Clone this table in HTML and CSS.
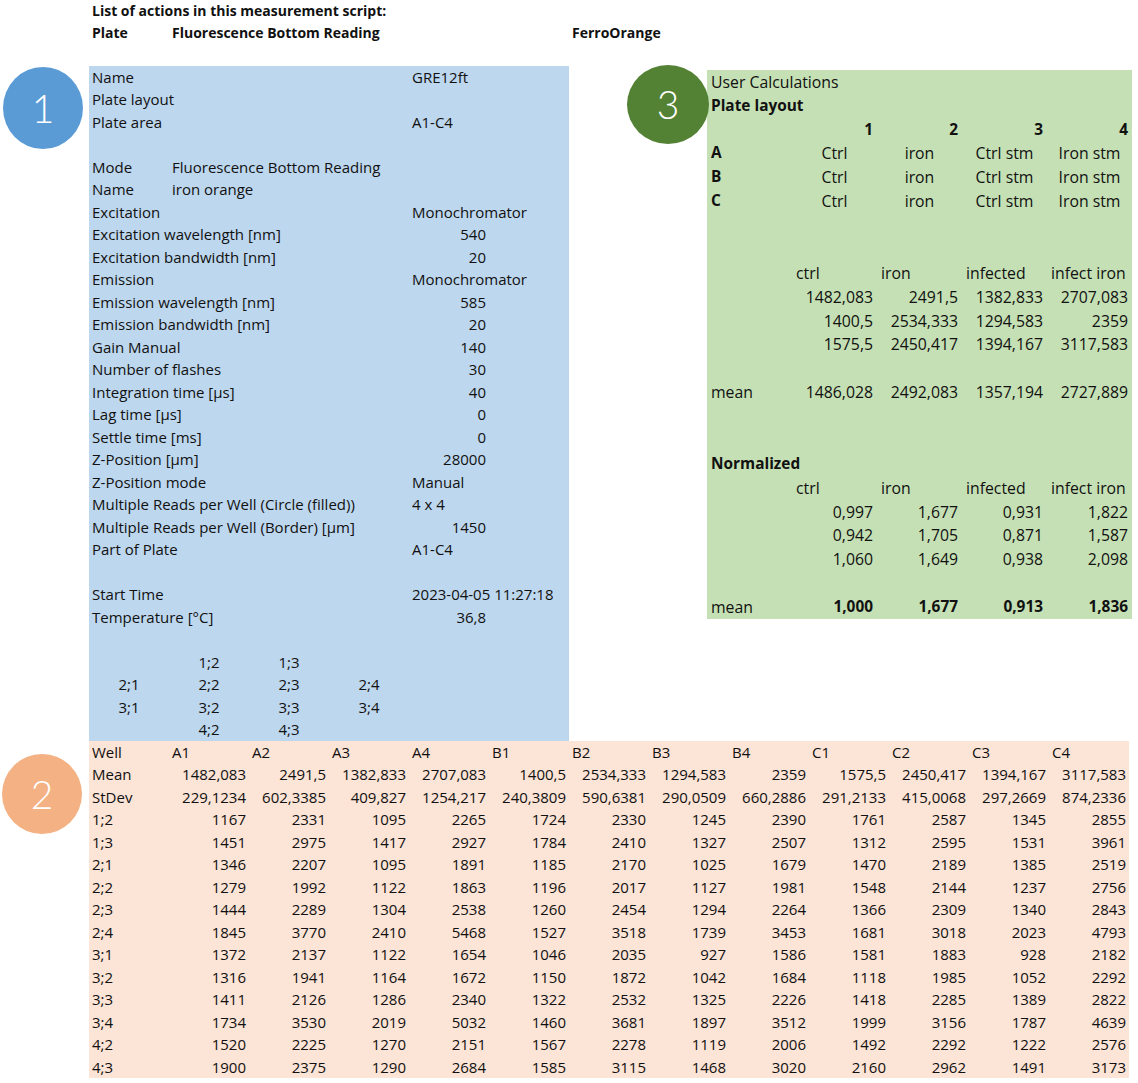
FILE: index.html
```html
<!DOCTYPE html>
<html lang="en">
<head>
<meta charset="utf-8">
<title>Measurement script</title>
<link rel="stylesheet" href="styles.css">
</head>
<body>
<div class="sheet">
  <div class="hrow"><div></div><div class="cell">List of actions in this measurement script:</div></div>
  <div class="hrow"><div></div><div class="cell">Plate</div><div class="cell">Fluorescence Bottom Reading</div><div></div><div></div><div></div><div></div><div class="cell">FerroOrange</div></div>
  <div class="hrow"></div>

  <div class="top">
    <div class="gutter g1"><div class="circle c-blue">1</div></div>
    <div class="blue">
      <div class="brow"><div class="cell s4">Name</div><div class="cell">GRE12ft</div></div>
      <div class="brow"><div class="cell s4">Plate layout</div></div>
      <div class="brow"><div class="cell s4">Plate area</div><div class="cell">A1-C4</div></div>
      <div class="brow"></div>
      <div class="brow"><div class="cell">Mode</div><div class="cell s4">Fluorescence Bottom Reading</div></div>
      <div class="brow"><div class="cell">Name</div><div class="cell s4">iron orange</div></div>
      <div class="brow"><div class="cell s4">Excitation</div><div class="cell">Monochromator</div></div>
      <div class="brow"><div class="cell s4">Excitation wavelength [nm]</div><div class="cell r">540</div></div>
      <div class="brow"><div class="cell s4">Excitation bandwidth [nm]</div><div class="cell r">20</div></div>
      <div class="brow"><div class="cell s4">Emission</div><div class="cell">Monochromator</div></div>
      <div class="brow"><div class="cell s4">Emission wavelength [nm]</div><div class="cell r">585</div></div>
      <div class="brow"><div class="cell s4">Emission bandwidth [nm]</div><div class="cell r">20</div></div>
      <div class="brow"><div class="cell s4">Gain Manual</div><div class="cell r">140</div></div>
      <div class="brow"><div class="cell s4">Number of flashes</div><div class="cell r">30</div></div>
      <div class="brow"><div class="cell s4">Integration time [µs]</div><div class="cell r">40</div></div>
      <div class="brow"><div class="cell s4">Lag time [µs]</div><div class="cell r">0</div></div>
      <div class="brow"><div class="cell s4">Settle time [ms]</div><div class="cell r">0</div></div>
      <div class="brow"><div class="cell s4">Z-Position [µm]</div><div class="cell r">28000</div></div>
      <div class="brow"><div class="cell s4">Z-Position mode</div><div class="cell">Manual</div></div>
      <div class="brow"><div class="cell s4">Multiple Reads per Well (Circle (filled))</div><div class="cell">4 x 4</div></div>
      <div class="brow"><div class="cell s4">Multiple Reads per Well (Border) [µm]</div><div class="cell r">1450</div></div>
      <div class="brow"><div class="cell s4">Part of Plate</div><div class="cell">A1-C4</div></div>
      <div class="brow"></div>
      <div class="brow"><div class="cell s4">Start Time</div><div class="cell">2023-04-05 11:27:18</div></div>
      <div class="brow"><div class="cell s4">Temperature [°C]</div><div class="cell r">36,8</div></div>
      <div class="brow"></div>
      <div class="brow"><div class="cell"></div><div class="cell c">1;2</div><div class="cell c">1;3</div></div>
      <div class="brow"><div class="cell c">2;1</div><div class="cell c">2;2</div><div class="cell c">2;3</div><div class="cell c">2;4</div></div>
      <div class="brow"><div class="cell c">3;1</div><div class="cell c">3;2</div><div class="cell c">3;3</div><div class="cell c">3;4</div></div>
      <div class="brow"><div class="cell"></div><div class="cell c">4;2</div><div class="cell c">4;3</div></div>
    </div>
    <div class="circle c-green">3</div>
    <div class="green">
      <div class="grow"><div class="cell s5">User Calculations</div></div>
      <div class="grow"><div class="cell s5 b">Plate layout</div></div>
      <div class="grow"><div></div><div class="cell r b">1</div><div class="cell r b">2</div><div class="cell r b">3</div><div class="cell r b">4</div></div>
      <div class="grow"><div class="cell b">A</div><div class="cell c">Ctrl</div><div class="cell c">iron</div><div class="cell c">Ctrl stm</div><div class="cell c">Iron stm</div></div>
      <div class="grow"><div class="cell b">B</div><div class="cell c">Ctrl</div><div class="cell c">iron</div><div class="cell c">Ctrl stm</div><div class="cell c">Iron stm</div></div>
      <div class="grow"><div class="cell b">C</div><div class="cell c">Ctrl</div><div class="cell c">iron</div><div class="cell c">Ctrl stm</div><div class="cell c">Iron stm</div></div>
      <div class="grow"></div>
      <div class="grow"></div>
      <div class="grow"><div></div><div class="cell">ctrl</div><div class="cell">iron</div><div class="cell">infected</div><div class="cell">infect iron</div></div>
      <div class="grow"><div></div><div class="cell r">1482,083</div><div class="cell r">2491,5</div><div class="cell r">1382,833</div><div class="cell r">2707,083</div></div>
      <div class="grow"><div></div><div class="cell r">1400,5</div><div class="cell r">2534,333</div><div class="cell r">1294,583</div><div class="cell r">2359</div></div>
      <div class="grow"><div></div><div class="cell r">1575,5</div><div class="cell r">2450,417</div><div class="cell r">1394,167</div><div class="cell r">3117,583</div></div>
      <div class="grow"></div>
      <div class="grow"><div class="cell">mean</div><div class="cell r">1486,028</div><div class="cell r">2492,083</div><div class="cell r">1357,194</div><div class="cell r">2727,889</div></div>
      <div class="grow"></div>
      <div class="grow"></div>
      <div class="grow"><div class="cell s5 b">Normalized</div></div>
      <div class="grow"><div></div><div class="cell">ctrl</div><div class="cell">iron</div><div class="cell">infected</div><div class="cell">infect iron</div></div>
      <div class="grow"><div></div><div class="cell r">0,997</div><div class="cell r">1,677</div><div class="cell r">0,931</div><div class="cell r">1,822</div></div>
      <div class="grow"><div></div><div class="cell r">0,942</div><div class="cell r">1,705</div><div class="cell r">0,871</div><div class="cell r">1,587</div></div>
      <div class="grow"><div></div><div class="cell r">1,060</div><div class="cell r">1,649</div><div class="cell r">0,938</div><div class="cell r">2,098</div></div>
      <div class="grow"></div>
      <div class="grow"><div class="cell">mean</div><div class="cell r b">1,000</div><div class="cell r b">1,677</div><div class="cell r b">0,913</div><div class="cell r b">1,836</div></div>
    </div>
  </div>

  <div class="bottom">
    <div class="gutter g2"><div class="circle c-orange">2</div></div>
    <div class="orange">
      <div class="orow"><div class="cell">Well</div><div class="cell">A1</div><div class="cell">A2</div><div class="cell">A3</div><div class="cell">A4</div><div class="cell">B1</div><div class="cell">B2</div><div class="cell">B3</div><div class="cell">B4</div><div class="cell">C1</div><div class="cell">C2</div><div class="cell">C3</div><div class="cell">C4</div></div>
      <div class="orow"><div class="cell">Mean</div><div class="cell r">1482,083</div><div class="cell r">2491,5</div><div class="cell r">1382,833</div><div class="cell r">2707,083</div><div class="cell r">1400,5</div><div class="cell r">2534,333</div><div class="cell r">1294,583</div><div class="cell r">2359</div><div class="cell r">1575,5</div><div class="cell r">2450,417</div><div class="cell r">1394,167</div><div class="cell r">3117,583</div></div>
      <div class="orow"><div class="cell">StDev</div><div class="cell r">229,1234</div><div class="cell r">602,3385</div><div class="cell r">409,827</div><div class="cell r">1254,217</div><div class="cell r">240,3809</div><div class="cell r">590,6381</div><div class="cell r">290,0509</div><div class="cell r">660,2886</div><div class="cell r">291,2133</div><div class="cell r">415,0068</div><div class="cell r">297,2669</div><div class="cell r">874,2336</div></div>
      <div class="orow"><div class="cell">1;2</div><div class="cell r">1167</div><div class="cell r">2331</div><div class="cell r">1095</div><div class="cell r">2265</div><div class="cell r">1724</div><div class="cell r">2330</div><div class="cell r">1245</div><div class="cell r">2390</div><div class="cell r">1761</div><div class="cell r">2587</div><div class="cell r">1345</div><div class="cell r">2855</div></div>
      <div class="orow"><div class="cell">1;3</div><div class="cell r">1451</div><div class="cell r">2975</div><div class="cell r">1417</div><div class="cell r">2927</div><div class="cell r">1784</div><div class="cell r">2410</div><div class="cell r">1327</div><div class="cell r">2507</div><div class="cell r">1312</div><div class="cell r">2595</div><div class="cell r">1531</div><div class="cell r">3961</div></div>
      <div class="orow"><div class="cell">2;1</div><div class="cell r">1346</div><div class="cell r">2207</div><div class="cell r">1095</div><div class="cell r">1891</div><div class="cell r">1185</div><div class="cell r">2170</div><div class="cell r">1025</div><div class="cell r">1679</div><div class="cell r">1470</div><div class="cell r">2189</div><div class="cell r">1385</div><div class="cell r">2519</div></div>
      <div class="orow"><div class="cell">2;2</div><div class="cell r">1279</div><div class="cell r">1992</div><div class="cell r">1122</div><div class="cell r">1863</div><div class="cell r">1196</div><div class="cell r">2017</div><div class="cell r">1127</div><div class="cell r">1981</div><div class="cell r">1548</div><div class="cell r">2144</div><div class="cell r">1237</div><div class="cell r">2756</div></div>
      <div class="orow"><div class="cell">2;3</div><div class="cell r">1444</div><div class="cell r">2289</div><div class="cell r">1304</div><div class="cell r">2538</div><div class="cell r">1260</div><div class="cell r">2454</div><div class="cell r">1294</div><div class="cell r">2264</div><div class="cell r">1366</div><div class="cell r">2309</div><div class="cell r">1340</div><div class="cell r">2843</div></div>
      <div class="orow"><div class="cell">2;4</div><div class="cell r">1845</div><div class="cell r">3770</div><div class="cell r">2410</div><div class="cell r">5468</div><div class="cell r">1527</div><div class="cell r">3518</div><div class="cell r">1739</div><div class="cell r">3453</div><div class="cell r">1681</div><div class="cell r">3018</div><div class="cell r">2023</div><div class="cell r">4793</div></div>
      <div class="orow"><div class="cell">3;1</div><div class="cell r">1372</div><div class="cell r">2137</div><div class="cell r">1122</div><div class="cell r">1654</div><div class="cell r">1046</div><div class="cell r">2035</div><div class="cell r">927</div><div class="cell r">1586</div><div class="cell r">1581</div><div class="cell r">1883</div><div class="cell r">928</div><div class="cell r">2182</div></div>
      <div class="orow"><div class="cell">3;2</div><div class="cell r">1316</div><div class="cell r">1941</div><div class="cell r">1164</div><div class="cell r">1672</div><div class="cell r">1150</div><div class="cell r">1872</div><div class="cell r">1042</div><div class="cell r">1684</div><div class="cell r">1118</div><div class="cell r">1985</div><div class="cell r">1052</div><div class="cell r">2292</div></div>
      <div class="orow"><div class="cell">3;3</div><div class="cell r">1411</div><div class="cell r">2126</div><div class="cell r">1286</div><div class="cell r">2340</div><div class="cell r">1322</div><div class="cell r">2532</div><div class="cell r">1325</div><div class="cell r">2226</div><div class="cell r">1418</div><div class="cell r">2285</div><div class="cell r">1389</div><div class="cell r">2822</div></div>
      <div class="orow"><div class="cell">3;4</div><div class="cell r">1734</div><div class="cell r">3530</div><div class="cell r">2019</div><div class="cell r">5032</div><div class="cell r">1460</div><div class="cell r">3681</div><div class="cell r">1897</div><div class="cell r">3512</div><div class="cell r">1999</div><div class="cell r">3156</div><div class="cell r">1787</div><div class="cell r">4639</div></div>
      <div class="orow"><div class="cell">4;2</div><div class="cell r">1520</div><div class="cell r">2225</div><div class="cell r">1270</div><div class="cell r">2151</div><div class="cell r">1567</div><div class="cell r">2278</div><div class="cell r">1119</div><div class="cell r">2006</div><div class="cell r">1492</div><div class="cell r">2292</div><div class="cell r">1222</div><div class="cell r">2576</div></div>
      <div class="orow"><div class="cell">4;3</div><div class="cell r">1900</div><div class="cell r">2375</div><div class="cell r">1290</div><div class="cell r">2684</div><div class="cell r">1585</div><div class="cell r">3115</div><div class="cell r">1468</div><div class="cell r">3020</div><div class="cell r">2160</div><div class="cell r">2962</div><div class="cell r">1491</div><div class="cell r">3173</div></div>
    </div>
  </div>
</div>
</body>
</html>
```
FILE: styles.css
```css
html, body {
  margin: 0;
  padding: 0;
  background: #ffffff;
}
body {
  font-family: "Open Sans", Lato, "Liberation Sans", sans-serif;
  font-size: 15px;
  color: #111111;
  width: 1138px;
  overflow: hidden;
}
.sheet {
  margin-top: -1px;
}
.cell {
  padding: 0 3px;
  white-space: nowrap;
  min-width: 0;
}
.r { text-align: right; }
.c { text-align: center; }
.b { font-weight: 700; }
.s4 { grid-column: span 4; }
.s5 { grid-column: span 5; }

.hrow, .brow, .orow {
  height: 22.5px;
  box-sizing: border-box;
  padding-top: 0.75px;
  line-height: 21.75px;
}

.hrow {
  display: grid;
  grid-template-columns: 89px repeat(13, 80px);
  font-weight: 700;
  font-size: 14px;
}
.sheet > .hrow:first-child {
  height: 21.75px;
}

.top, .bottom {
  display: flex;
  align-items: flex-start;
}
.gutter {
  width: 89px;
  flex: none;
  box-sizing: border-box;
}
.g1 { padding: 1px 0 0 3px; }
.g2 { padding: 13px 0 0 2px; }

.circle {
  width: 80px;
  height: 82px;
  border-radius: 50%;
  display: flex;
  align-items: center;
  justify-content: center;
  color: #ffffff;
  font-family: Lato, "Open Sans", sans-serif;
  font-size: 39px;
  font-weight: 300;
  flex: none;
}
.c-blue { background: #5b9bd5; }
.c-orange { background: #f4b183; height: 80px; }
.c-green {
  background: #548235;
  width: 82px;
  height: 79px;
  margin-left: 58px;
  margin-top: -1px;
  position: relative;
  z-index: 1;
}

.blue {
  background: #bdd7ee;
  width: 480px;
  flex: none;
}
.brow {
  display: grid;
  grid-template-columns: repeat(6, 80px);
}

.green {
  background: #c5e0b4;
  width: 425px;
  flex: none;
  margin-top: 4px;
  margin-left: -2px;
  font-size: 15.8px;
}
.green .b {
  font-size: 15.4px;
}
.grow {
  display: grid;
  grid-template-columns: repeat(5, 85px);
  height: 23.88px;
  box-sizing: border-box;
  padding-top: 1px;
  line-height: 22.88px;
}
.grow .cell { padding: 0 4px; }

.orange {
  background: #fce4d6;
  width: 1040px;
  flex: none;
}
.orow {
  display: grid;
  grid-template-columns: repeat(13, 80px);
}
```
